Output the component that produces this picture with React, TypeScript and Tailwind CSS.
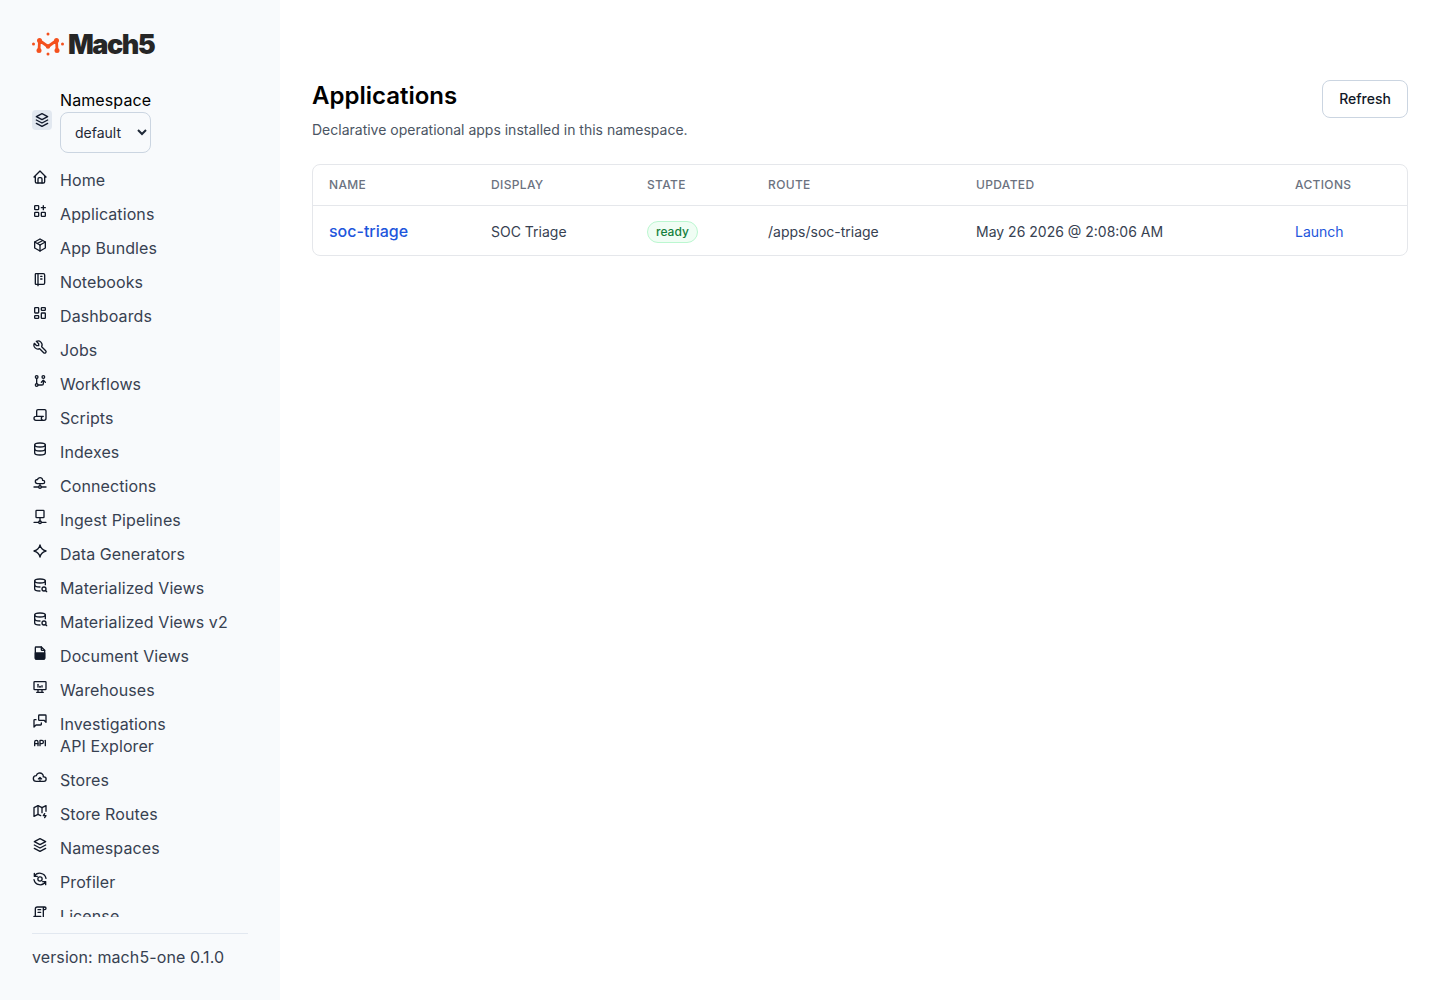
import React from "react";
import {
  TbHome, TbApps, TbPackage, TbNotebook, TbLayoutDashboard, TbTool, TbGitBranch, TbScript, TbDatabase,
  TbCloudDataConnection, TbDatabaseSearch, TbDeviceDesktopAnalytics, TbMessages,
  TbApi, TbMapBolt, TbLicense,
} from "react-icons/tb";

type IconProps = { size?: number; className?: string };

function Svg({ size = 16, className, children }: IconProps & { children: React.ReactNode }) {
  return (
    <svg width={size} height={size} viewBox="0 0 24 24" fill="none" stroke="currentColor" strokeWidth="2" strokeLinecap="round" strokeLinejoin="round" className={className}>
      {children}
    </svg>
  );
}

const IngestIcon = (p: IconProps) => (
  <Svg {...p}>
    <rect x="6" y="2" width="12" height="11" rx="1" />
    <path d="M12 13v5M3 20h7M14 20h7" />
    <circle cx="12" cy="20" r="2" />
  </Svg>
);
const StarIcon = (p: IconProps) => (
  <Svg {...p}>
    <path d="M12 3c1 4.500 4 7.500 9 9c-5 1.500-8 4.500-9 9c-1-4.500-4-7.500-9-9c5-1.500 8-4.500 9-9z" />
  </Svg>
);
const DocIcon = (p: IconProps) => (
  <Svg {...p}>
    <path d="M14 3H6a1 1 0 0 0-1 1v16a1 1 0 0 0 1 1h12a1 1 0 0 0 1-1V8z" />
    <path d="M14 3v4a1 1 0 0 0 1 1h4" />
    <path d="M5 12h14v8a1 1 0 0 1-1 1H6a1 1 0 0 1-1-1z" fill="currentColor" />
  </Svg>
);
const StoreIcon = (p: IconProps) => (
  <Svg {...p}>
    <path d="M6.500 18.500c-2.500 0-4.500-1.900-4.500-4.300s2-4.300 4.500-4.300c.4-1.700 1.700-3.100 3.500-3.600 1.800-.5 3.800-.2 5.200 1 1.400 1.100 2.100 2.900 1.700 4.500h1c1.800 0 3.300 1.500 3.300 3.300 0 1.900-1.500 3.400-3.300 3.400z" />
    <path d="M12 18v-5M9.500 15l2.500-2.500 2.500 2.500" strokeWidth="1.700" />
  </Svg>
);
const ProfilerIcon = (p: IconProps) => (
  <Svg {...p}>
    <path d="M21 11a9.500 9.500 0 0 0-17.500-3m0-4.500v4.500h4.500" />
    <path d="M3 13a9.500 9.500 0 0 0 17.500 3m0 4.500v-4.500h-4.500" />
    <circle cx="12" cy="12" r="3.200" />
  </Svg>
);
const StackIcon = (p: IconProps) => (
  <Svg {...p}>
    <path d="M12 2.500l-8.500 4.500l8.500 4.500l8.500-4.500z" />
    <path d="M3.500 12l8.500 4.500l8.500-4.500" />
    <path d="M3.500 17l8.500 4.500l8.500-4.500" />
  </Svg>
);

const nav: [string, React.ComponentType<IconProps>][] = [
  ["Home", TbHome],
  ["Applications", TbApps],
  ["App Bundles", TbPackage],
  ["Notebooks", TbNotebook],
  ["Dashboards", TbLayoutDashboard],
  ["Jobs", TbTool],
  ["Workflows", TbGitBranch],
  ["Scripts", TbScript],
  ["Indexes", TbDatabase],
  ["Connections", TbCloudDataConnection],
  ["Ingest Pipelines", IngestIcon],
  ["Data Generators", StarIcon],
  ["Materialized Views", TbDatabaseSearch],
  ["Materialized Views v2", TbDatabaseSearch],
  ["Document Views", DocIcon],
  ["Warehouses", TbDeviceDesktopAnalytics],
  ["Investigations", TbMessages],
  ["API Explorer", TbApi],
  ["Stores", StoreIcon],
  ["Store Routes", TbMapBolt],
  ["Namespaces", StackIcon],
  ["Profiler", ProfilerIcon],
  ["License", TbLicense],
];

function Logo() {
  return (
    <div className="flex items-center h-6">
      <svg width="34" height="24" viewBox="0 0 34 24" fill="none" className="shrink-0">
        <path d="M7 18.500L7.500 8.500L16 14.500L24.500 8.500L25 18.500" stroke="#f4511e" strokeWidth="2.800" strokeLinejoin="round" />
        <g fill="#f4511e">
          <circle cx="7.500" cy="8.500" r="2.500" /><circle cx="24.500" cy="8.500" r="2.500" /><circle cx="16" cy="14.500" r="2.200" />
          <circle cx="7" cy="18.500" r="2.500" /><circle cx="25" cy="18.500" r="2.500" />
          <circle cx="16" cy="2" r="1.500" /><circle cx="16" cy="22" r="1.500" /><circle cx="1.500" cy="12" r="1.500" /><circle cx="30.500" cy="12" r="1.500" />
        </g>
      </svg>
      <span className="ml-[2px] translate-y-px font-['Inter',sans-serif] text-[27px] font-black leading-6 tracking-[-1.500px] text-[#262626]">Mach5</span>
    </div>
  );
}

export default function App() {
  return (
    <div className="flex h-[1000px] overflow-hidden bg-white font-['Inter',sans-serif] text-[#111827]">
      <aside className="flex h-full w-[280px] shrink-0 flex-col bg-[#f8fafc] px-8 pt-8 pb-[32px] tracking-[0.1px]">
        <Logo />
        <div className="mt-[33px] flex items-center gap-2">
          <div className="flex h-5 w-5 -translate-y-px items-center justify-center rounded bg-[#e2e8f0]">
            <StackIcon size={16} className="text-[#0f172a]" />
          </div>
          <div className="flex flex-col">
            <span className="text-base leading-[22px] text-black">Namespace</span>
            <select defaultValue="default" className="mt-px h-[41px] w-[91px] rounded-lg border border-[#cbd5e1] bg-[#f8fafc] pl-[10px] text-sm tracking-normal text-[#1f2937]">
              <option value="default">default</option>
            </select>
          </div>
        </div>
        <nav className="mt-[10px] min-h-0 flex-1 overflow-hidden">
          {nav.map(([label, Icon]) => (
            <div
              key={label}
              className={
                "flex items-start gap-3 text-base leading-[22px] text-[#374151] " +
                (label === "Investigations" ? "pt-1.5" : label === "API Explorer" ? "pb-1.5" : "py-1.5")
              }
            >
              <Icon size={16} className="shrink-0 text-[#111827]" />
              <span>{label}</span>
            </div>
          ))}
        </nav>
        <div className="mt-4 border-t border-[#e2e8f0] pt-3 text-base leading-[22px] text-[#374151]">version: mach5-one 0.1.0</div>
      </aside>
      <main className="min-w-0 flex-1 px-8 pt-20">
        <div className="flex items-start justify-between">
          <div>
            <h1 className="text-2xl leading-[32px] font-semibold text-black">Applications</h1>
            <p className="mt-[10px] text-sm leading-4 text-[#4b5563]">Declarative operational apps installed in this namespace.</p>
          </div>
          <button className="h-[38px] w-[86px] rounded-lg border border-[#cbd5e1] bg-white text-sm font-medium text-[#111827]">Refresh</button>
        </div>
        <div className="mt-[26px] overflow-hidden rounded-lg border border-[#e5e7eb]">
          <table className="w-full table-fixed border-collapse text-sm text-[#374151]">
            <colgroup>
              <col className="w-[162px]" /><col className="w-[156px]" /><col className="w-[121px]" /><col className="w-[208px]" /><col className="w-[319px]" /><col />
            </colgroup>
            <thead>
              <tr className="h-[40px] border-b border-[#e5e7eb] text-left text-xs font-medium tracking-[0.35px] text-[#6b7280] uppercase">
                <th className="px-4 font-medium">Name</th>
                <th className="px-4 font-medium">Display</th>
                <th className="px-4 font-medium">State</th>
                <th className="px-4 font-medium">Route</th>
                <th className="px-4 font-medium">Updated</th>
                <th className="px-4 font-medium">Actions</th>
              </tr>
            </thead>
            <tbody>
              <tr className="h-[50px]">
                <td className="px-4 pt-[2px] text-base font-medium text-[#1e56dc]">soc-triage</td>
                <td className="px-4 pt-[3px]">SOC Triage</td>
                <td className="px-4 pt-1">
                  <span className="inline-block rounded-full border border-[#bbf7d0] bg-[#f0fdf4] px-2 text-xs leading-5 font-medium text-[#15803d]">ready</span>
                </td>
                <td className="px-4 pt-[3px]">/apps/soc-triage</td>
                <td className="px-4 pt-[3px]">May 26 2026 @ 2:08:06 AM</td>
                <td className="px-4 pt-[3px] text-[#1e56dc]">Launch</td>
              </tr>
            </tbody>
          </table>
        </div>
      </main>
    </div>
  );
}
